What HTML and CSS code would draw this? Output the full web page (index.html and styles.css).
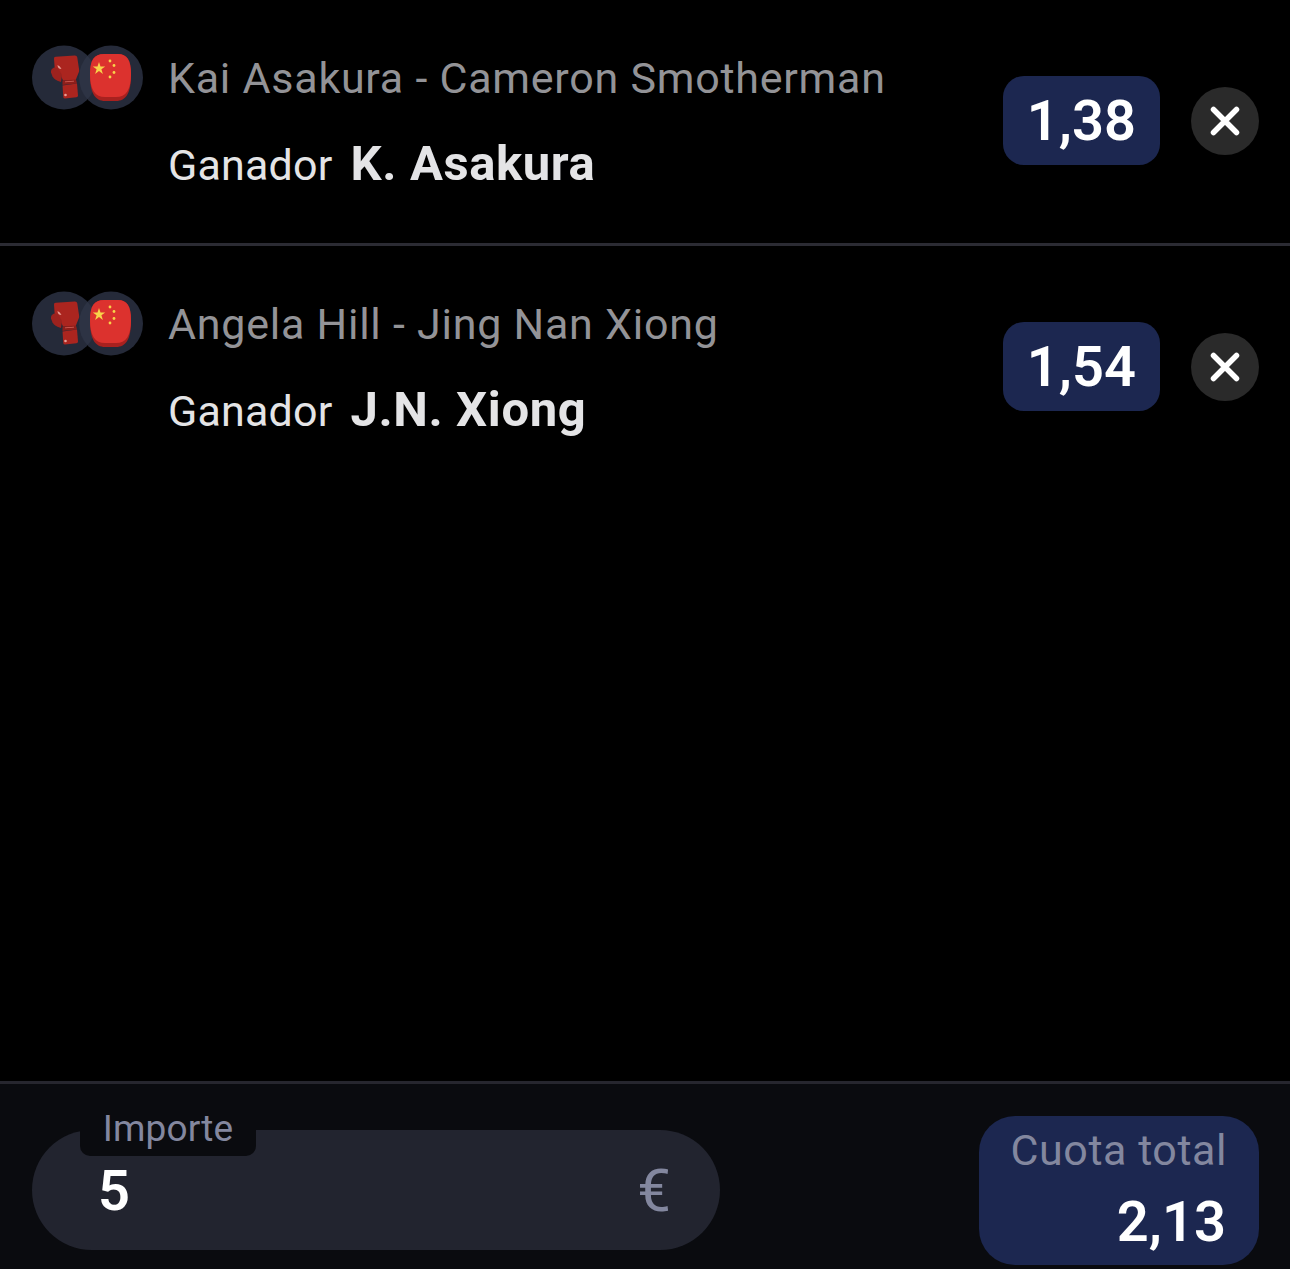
FILE: index.html
```html
<!DOCTYPE html>
<html lang="es">
<head>
    <meta charset="UTF-8">
    <meta name="viewport" content="width=device-width, initial-scale=1.0">
    <title>Boleto</title>
    <link rel="stylesheet" href="styles.css">
</head>
<body>
    <svg class="defs" width="0" height="0">
        <symbol id="sport-badges" viewBox="0 0 111 65">
            <circle cx="32" cy="32.500" r="32" fill="#252a39"/>
            <!-- glove -->
            <path d="M22 13.800q-.3-1.800 1.700-2l19-1.200q2.300-.1 2.600 2l2 13.400-3.800 9.500H31l-3-7-5-1z" fill="#ab251f"/>
            <path d="M22 22.500q-3.500 1.500-3 5l1.500 4q2 3.500 8.500 5.500l1-7-4-7z" fill="#9c221e"/>
            <path d="M25.500 20q2.500 1 4 4l-2.500-.5q-1.500-1.500-1.500-3.500z" fill="#e8a097"/>
            <path d="M30.500 35.500l13.500-1 1 4-14.500 1.500z" fill="#8f1e1a"/>
            <path d="M33 36.500l9-.8v.8l-9 .8z" fill="#d8655c"/>
            <path d="M30.500 40.500l14.500-2 1 12q0 1.500-1.600 1.700L33 53.600q-1.500 0-1.700-1.500z" fill="#ab251f"/>
            <circle cx="33.500" cy="50" r="1.300" fill="#e8a097"/>
            <circle cx="79" cy="32.500" r="32" fill="#252a39"/>
            <path d="M55.500 10.800A32 32 0 0 1 55.500 54.200A32 32 0 0 1 55.500 10.800z" fill="#2d3344"/>
            <!-- flag glove -->
            <path d="M58 30C58 15 62 9 72 9h14c9 0 13 6 13 21 0 18-5 26-15 26H73C63 56 58 48 58 30z" fill="#a8211f"/>
            <path d="M58 29C58 15 62 9 72 9h14c9 0 13 6 13 20 0 16-5 23-15 23H73C63 52 58 45 58 29z" fill="#dc322e"/>
            <path d="M67 17l1.500 4.500h4.700l-3.800 2.800 1.500 4.600-3.900-2.900-3.900 2.900 1.500-4.600-3.800-2.800h4.700z" fill="#f8d34a"/>
            <circle cx="78" cy="16" r="1.400" fill="#f8d34a"/>
            <circle cx="82" cy="20.500" r="1.400" fill="#f8d34a"/>
            <circle cx="82" cy="27.500" r="1.400" fill="#f8d34a"/>
            <circle cx="78" cy="32" r="1.400" fill="#f8d34a"/>
        </symbol>
        <symbol id="close-x" viewBox="0 0 30 30">
            <path d="M3.500 3.500l23 23M26.500 3.500l-23 23" fill="none" stroke="#fff" stroke-width="5.500" stroke-linecap="round"/>
        </symbol>
    </svg>

    <div class="slip">
        <div class="bets">
            <div class="bet">
                <div class="bet-info">
                    <svg class="badges"><use href="#sport-badges"/></svg>
                    <div class="bet-text">
                        <div class="match">Kai Asakura - Cameron Smotherman</div>
                        <div class="pick"><span class="market">Ganador</span><span class="winner">K. Asakura</span></div>
                    </div>
                </div>
                <div class="odds">1,38</div>
                <button class="remove"><svg class="remove-icon"><use href="#close-x"/></svg></button>
            </div>
            <div class="bet">
                <div class="bet-info">
                    <svg class="badges"><use href="#sport-badges"/></svg>
                    <div class="bet-text">
                        <div class="match">Angela Hill - Jing Nan Xiong</div>
                        <div class="pick"><span class="market">Ganador</span><span class="winner">J.N. Xiong</span></div>
                    </div>
                </div>
                <div class="odds">1,54</div>
                <button class="remove"><svg class="remove-icon"><use href="#close-x"/></svg></button>
            </div>
        </div>

        <div class="summary">
            <div class="stake">
                <span class="stake-label">Importe</span>
                <span class="stake-value">5</span>
                <span class="currency">€</span>
            </div>
            <div class="total">
                <div class="total-label">Cuota total</div>
                <div class="total-value">2,13</div>
            </div>
        </div>
    </div>
</body>
</html>
```

FILE: styles.css
```css
* {
    box-sizing: border-box;
}
html, body {
    margin: 0;
    height: 100%;
}
body {
    background-color: #000;
    font-family: Roboto, "Liberation Sans", sans-serif;
    color: #fff;
}
.defs {
    display: block;
    height: 0;
}
.slip {
    height: 1269px;
    display: flex;
    flex-direction: column;
    overflow: hidden;
}
.bets {
    flex: 1;
}
.bet {
    height: 246px;
    padding: 0 31px 2px 32px;
    display: flex;
    align-items: center;
    border-bottom: 3px solid #2b2b33;
}
.bet:last-child {
    padding-bottom: 5px;
    border-bottom: none;
}
.bet-info {
    flex: 1;
    align-self: flex-start;
    margin-top: 45px;
    display: flex;
    align-items: flex-start;
    gap: 25px;
}
.badges {
    width: 111px;
    height: 65px;
    flex-shrink: 0;
}
.bet-text {
    padding-top: 8px;
    display: flex;
    flex-direction: column;
    gap: 36px;
}
.match {
    font-size: 43px;
    line-height: 50px;
    letter-spacing: 0.75px;
    color: #939397;
}
.pick {
    display: flex;
    align-items: baseline;
    gap: 18px;
    line-height: 50px;
}
.market {
    font-size: 43px;
    letter-spacing: 0.2px;
    color: #e4e4e6;
}
.winner {
    font-size: 49px;
    font-weight: 700;
    letter-spacing: 0.6px;
    color: #e4e4e6;
}
.odds {
    height: 89px;
    padding: 0 24px;
    display: flex;
    align-items: center;
    background-color: #1c2750;
    border-radius: 21px;
    font-size: 56px;
    font-weight: 600;
}
.remove {
    width: 68px;
    height: 68px;
    margin-left: 31px;
    padding: 0;
    display: flex;
    align-items: center;
    justify-content: center;
    background-color: #2a2a2a;
    border: none;
    border-radius: 50%;
}
.remove-icon {
    width: 30px;
    height: 30px;
}
.summary {
    height: 188px;
    padding: 30px 31px 4px 32px;
    display: flex;
    justify-content: space-between;
    align-items: center;
    background-color: #0a0b0f;
    border-top: 3px solid #26262e;
}
.stake {
    position: relative;
    width: 688px;
    height: 120px;
    padding: 2px 49px 0 66px;
    display: flex;
    align-items: center;
    justify-content: space-between;
    background-color: #22242f;
    border-radius: 60px;
}
.stake-label {
    position: absolute;
    left: 48px;
    top: -25px;
    width: 176px;
    height: 51px;
    text-align: center;
    background-color: #0a0b0f;
    border-radius: 0 0 10px 10px;
    font-size: 37px;
    line-height: 48px;
    letter-spacing: 0.1px;
    color: #83879f;
}
.stake-value {
    font-size: 56px;
    font-weight: 600;
}
.currency {
    font-size: 60px;
    font-weight: 400;
    color: #83879f;
}
.total {
    width: 280px;
    height: 149px;
    margin-top: 2px;
    padding: 9px 33px 0 0;
    background-color: #1c2750;
    border-radius: 36px;
    text-align: right;
}
.total-label {
    margin-right: -1px;
    font-size: 43px;
    line-height: 50px;
    letter-spacing: 0.55px;
    color: #83879f;
}
.total-value {
    font-size: 56px;
    font-weight: 600;
    line-height: 70px;
    margin-top: 12px;
}
```
